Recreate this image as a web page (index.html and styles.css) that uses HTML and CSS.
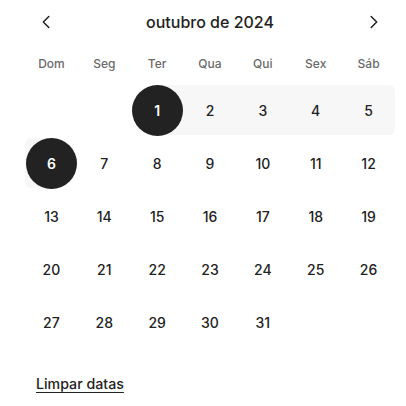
FILE: index.html
```html
<!DOCTYPE html>
<html lang="pt-BR">
<head>
<meta charset="utf-8">
<link rel="stylesheet" href="styles.css">
</head>
<body>
<div class="cal">
  <div class="header">
    <button class="nav" aria-label="Mês anterior">
      <svg width="16" height="16" viewBox="0 0 16 16"><path d="M10.8 2.5 L5.3 8 L10.8 13.5" fill="none" stroke="#222" stroke-width="1.5" stroke-linecap="round" stroke-linejoin="round"/></svg>
    </button>
    <div class="title">outubro de 2024</div>
    <button class="nav" aria-label="Próximo mês">
      <svg width="16" height="16" viewBox="0 0 16 16"><path d="M5.2 2.5 L10.7 8 L5.2 13.5" fill="none" stroke="#222" stroke-width="1.5" stroke-linecap="round" stroke-linejoin="round"/></svg>
    </button>
  </div>
  <div class="weekdays">
    <span>Dom</span><span>Seg</span><span>Ter</span><span>Qua</span><span>Qui</span><span>Sex</span><span>Sáb</span>
  </div>
  <div class="grid">
    <div class="cell"></div>
    <div class="cell"></div>
    <div class="cell"><div class="band band-start"><span class="circle">1</span></div></div>
    <div class="cell"><div class="band"><span class="num">2</span></div></div>
    <div class="cell"><div class="band"><span class="num">3</span></div></div>
    <div class="cell"><div class="band"><span class="num">4</span></div></div>
    <div class="cell"><div class="band band-end"><span class="num">5</span></div></div>

    <div class="cell"><div class="band band-single"><span class="circle">6</span></div></div>
    <div class="cell"><span class="num">7</span></div>
    <div class="cell"><span class="num">8</span></div>
    <div class="cell"><span class="num">9</span></div>
    <div class="cell"><span class="num">10</span></div>
    <div class="cell"><span class="num">11</span></div>
    <div class="cell"><span class="num">12</span></div>

    <div class="cell"><span class="num">13</span></div>
    <div class="cell"><span class="num">14</span></div>
    <div class="cell"><span class="num">15</span></div>
    <div class="cell"><span class="num">16</span></div>
    <div class="cell"><span class="num">17</span></div>
    <div class="cell"><span class="num">18</span></div>
    <div class="cell"><span class="num">19</span></div>

    <div class="cell"><span class="num">20</span></div>
    <div class="cell"><span class="num">21</span></div>
    <div class="cell"><span class="num">22</span></div>
    <div class="cell"><span class="num">23</span></div>
    <div class="cell"><span class="num">24</span></div>
    <div class="cell"><span class="num">25</span></div>
    <div class="cell"><span class="num">26</span></div>

    <div class="cell"><span class="num">27</span></div>
    <div class="cell"><span class="num">28</span></div>
    <div class="cell"><span class="num">29</span></div>
    <div class="cell"><span class="num">30</span></div>
    <div class="cell"><span class="num">31</span></div>
    <div class="cell"></div>
    <div class="cell"></div>
  </div>
  <div class="footer"><a class="clear" href="#">Limpar datas</a></div>
</div>
</body>
</html>
```

FILE: styles.css
```css
html, body {
  margin: 0;
  padding: 0;
  background: #fff;
}
body {
  font-family: Inter, "Noto Sans", "Liberation Sans", sans-serif;
  color: #222;
}
.cal {
  width: 370px;
  margin-left: 25px;
}
.header {
  height: 44px;
  display: flex;
  align-items: center;
  justify-content: space-between;
}
.nav {
  width: 42px;
  height: 32px;
  border: 0;
  background: none;
  padding: 0;
  display: flex;
  align-items: center;
  justify-content: center;
}
.title {
  font-size: 16px;
  font-weight: 500;
  line-height: 20px;
}
.weekdays {
  margin-top: 10px;
  height: 20px;
  display: grid;
  grid-template-columns: repeat(7, 1fr);
  font-size: 12px;
  font-weight: 500;
  color: #6a6a6a;
  line-height: 20px;
  text-align: center;
}
.grid {
  margin-top: 9.5px;
  display: grid;
  grid-template-columns: repeat(7, 1fr);
  grid-auto-rows: 53px;
}
.cell {
  display: flex;
  align-items: center;
  justify-content: center;
  font-size: 14px;
  font-weight: 500;
}
.band {
  width: 100%;
  height: 50px;
  background: #f7f7f7;
  display: flex;
  align-items: center;
  justify-content: center;
}
.band-start {
  background: linear-gradient(to right, transparent 50%, #f7f7f7 50%);
}
.band-end {
  border-radius: 0 6px 6px 0;
}
.band-single {
  border-radius: 6px 0 0 6px;
  background: linear-gradient(to right, #f7f7f7 50%, transparent 50%);
}
.circle {
  width: 51px;
  height: 51px;
  border-radius: 50%;
  background: #222;
  color: #fff;
  font-weight: 600;
  display: flex;
  align-items: center;
  justify-content: center;
}
.footer {
  margin-top: 24px;
  padding-left: 11px;
  line-height: 20px;
}
.clear {
  font-size: 14.2px;
  font-weight: 500;
  color: #222;
  text-decoration: underline;
  text-underline-offset: 3px;
}
```
